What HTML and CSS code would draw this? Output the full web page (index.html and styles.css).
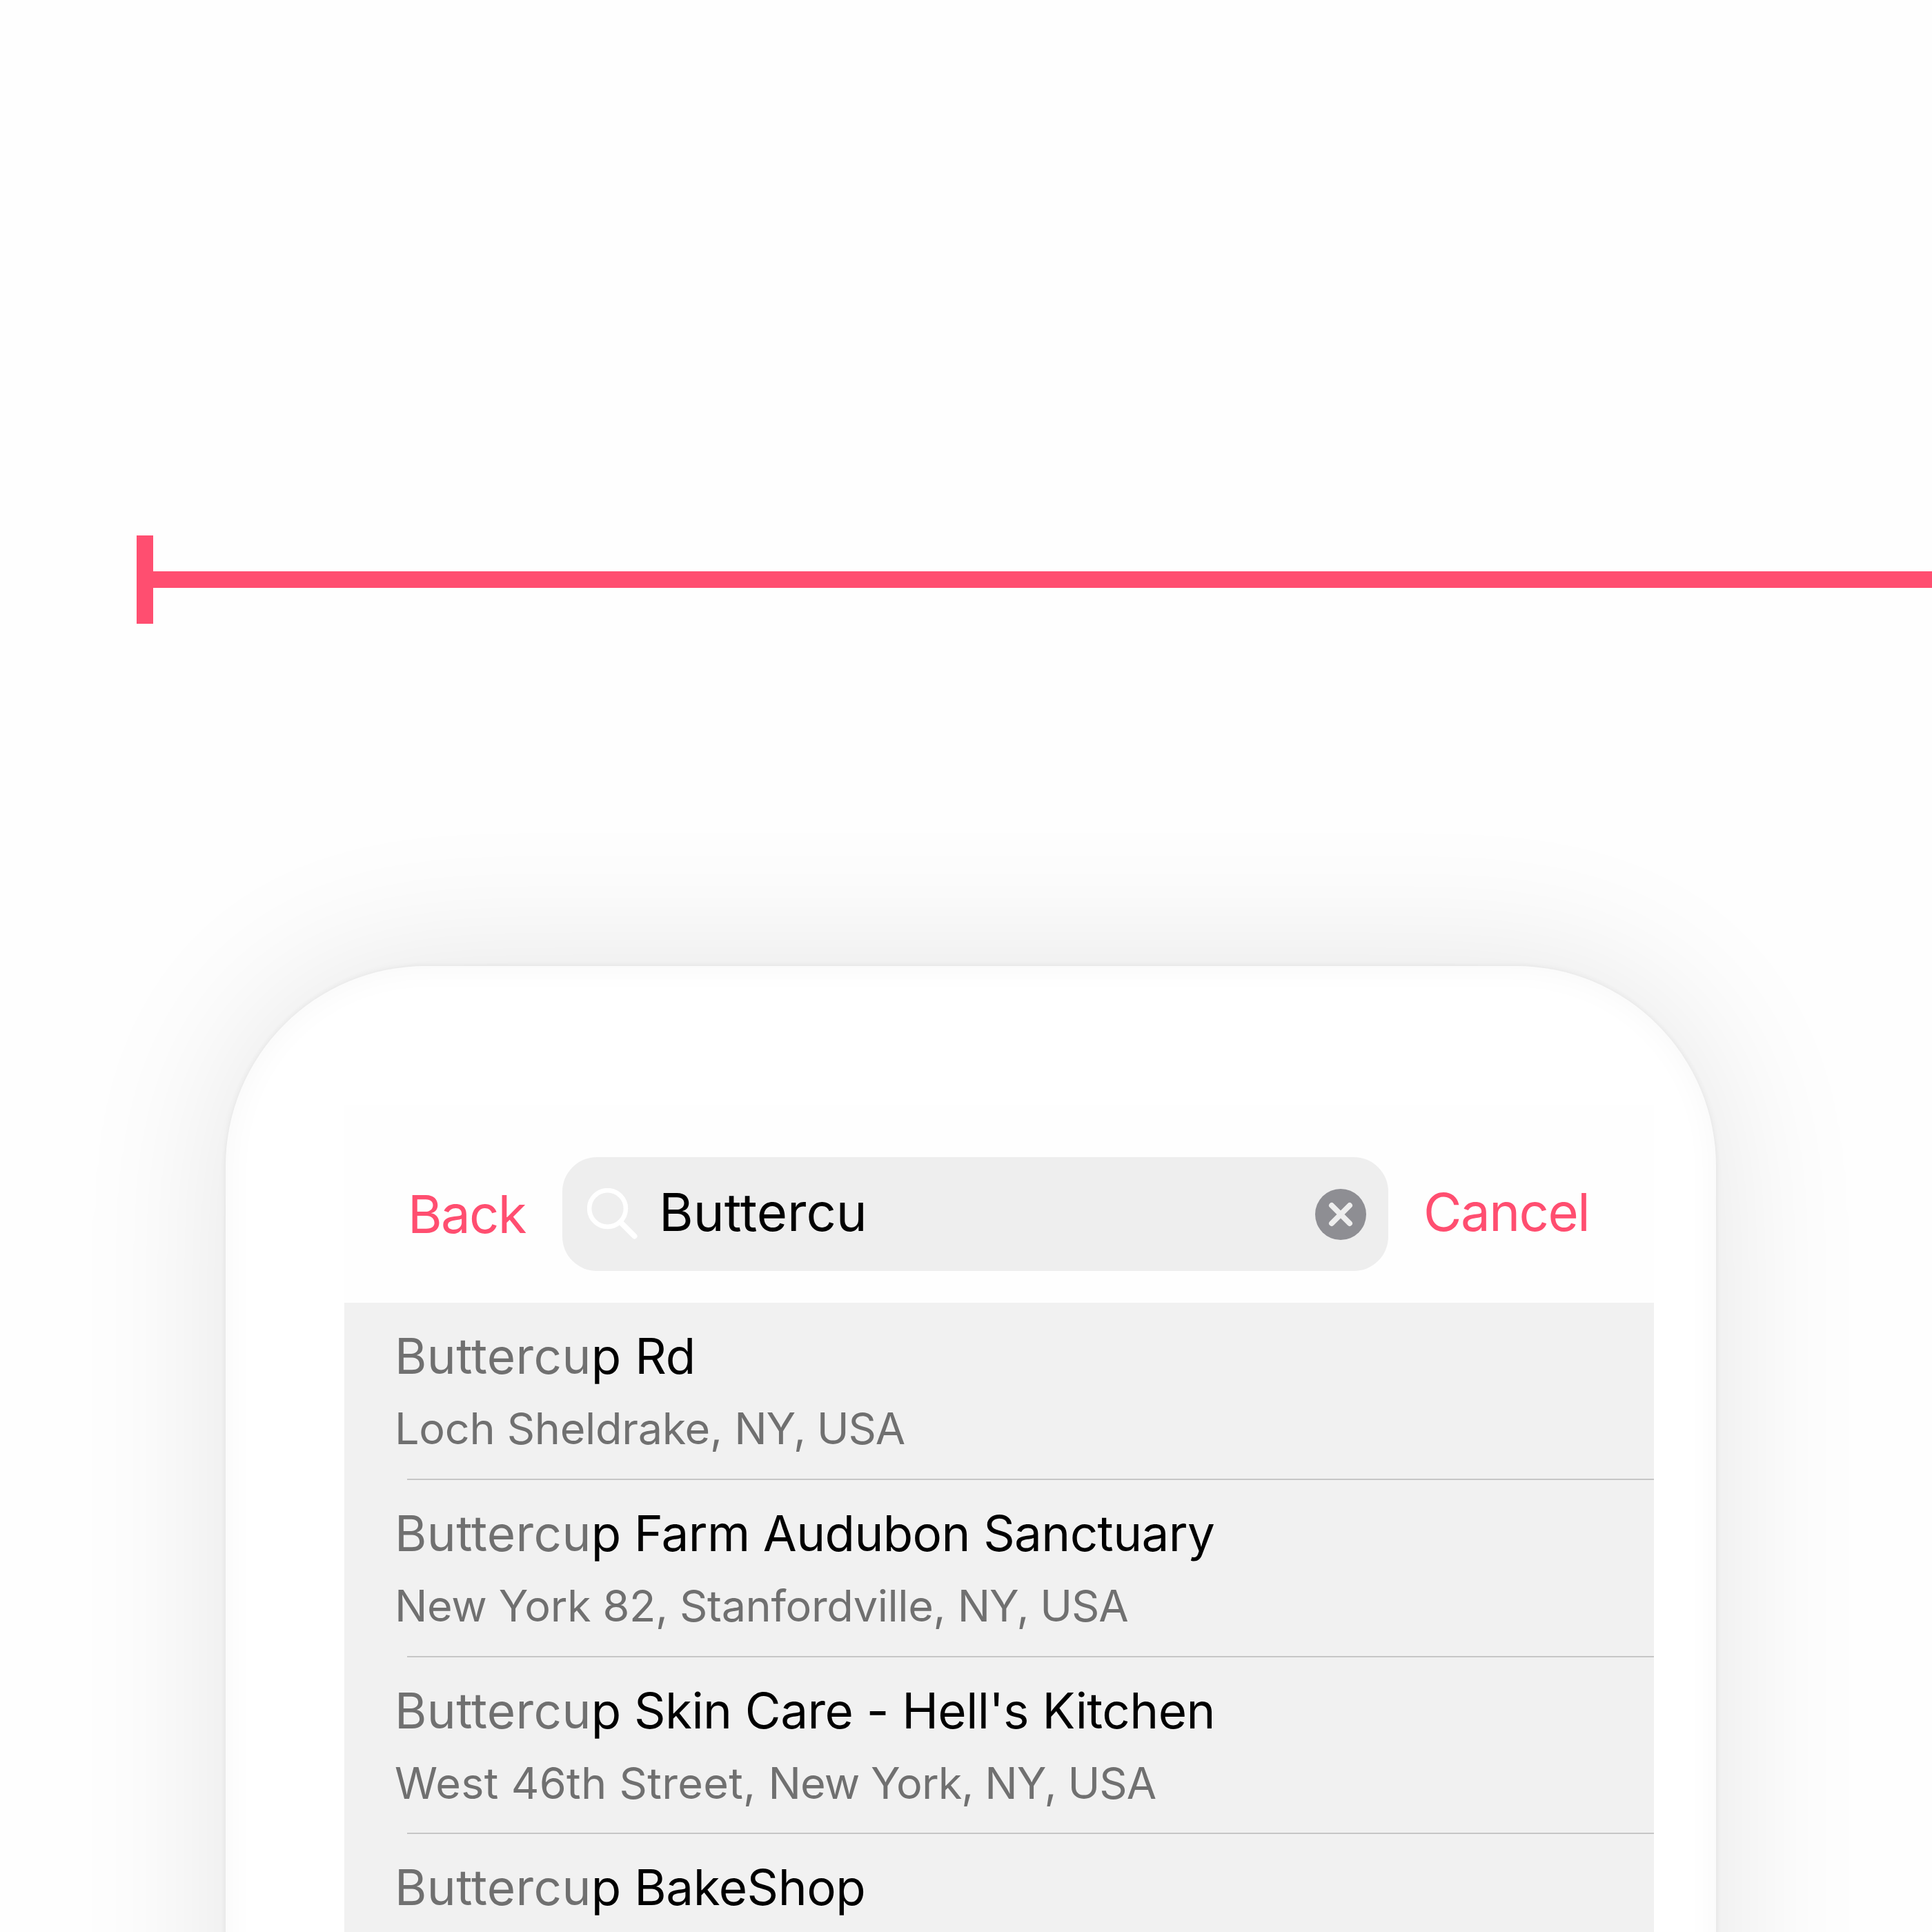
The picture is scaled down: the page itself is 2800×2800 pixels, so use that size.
FILE: index.html
```html
<!DOCTYPE html>
<html lang="en">
<head>
<meta charset="utf-8">
<title>Place search</title>
<link rel="stylesheet" href="styles.css">
</head>
<body>
<div class="measure"><span class="measure-cap"></span><span class="measure-line"></span></div>
<main class="phone">
  <div class="screen">
    <header class="search-bar">
      <a class="action back">Back</a>
      <div class="field">
        <svg class="icon-search" viewBox="0 0 74 76"><circle cx="29.500" cy="29.500" r="26.400"/><path class="handle" d="M49 50L68.500 69.500"/></svg>
        <span class="query">Buttercu</span>
        <svg class="icon-clear" viewBox="0 0 74 74"><circle cx="37" cy="37" r="37"/><path d="M24 24L50 50M50 24L24 50"/></svg>
      </div>
      <a class="action cancel">Cancel</a>
    </header>
    <ul class="results">
      <li class="result road"><p class="title"><span class="match">Buttercu</span>p Rd</p><p class="address"><span class="place">Loch Sheldrake, </span>NY, USA</p></li>
      <li class="result farm"><p class="title"><span class="match">Buttercu</span>p Farm Audubon Sanctuary</p><p class="address"><span class="place">New York 82, Stanfordville, </span>NY, USA</p></li>
      <li class="result skin"><p class="title"><span class="match">Buttercu</span>p Skin Care - Hell's Kitchen</p><p class="address"><span class="place">West 46th Street, </span>New York, NY, USA</p></li>
      <li class="result bake"><p class="title"><span class="match">Buttercu</span>p BakeShop</p></li>
    </ul>
  </div>
</main>
</body>
</html>
```
FILE: styles.css
```css
* { box-sizing: border-box; margin: 0; padding: 0; }

html { overflow: hidden; }

body {
  width: 2800px;
  height: 2800px;
  overflow: hidden;
  background: #fefefe;
  font-family: Inter, "Liberation Sans", sans-serif;
}

.measure {
  display: flex;
  align-items: center;
  margin: 776px 0 496px 198px;
  height: 128px;
}

.measure-cap { width: 24px; height: 128px; background: #ff4e70; }
.measure-line { flex: 1; height: 24px; background: #ff4e70; }

.phone {
  width: 2160px;
  height: 1750px;
  margin-left: 327px;
  padding: 201px 90px 0 172px;
  border-radius: 290px 290px 0 0;
  background: #fff;
  box-shadow:
    0 0 8px rgba(0, 0, 0, 0.07),
    0 0 225px rgba(0, 0, 0, 0.105),
    inset 0 0 50px rgba(0, 0, 0, 0.035);
}

.screen { background: #fefefe; }

.search-bar {
  display: flex;
  align-items: center;
  height: 287px;
  padding: 30px 0 0 92px;
}

.action { color: #ff4e70; font-size: 76px; line-height: 92px; white-space: nowrap; }
.back { width: 224px; padding-bottom: 2px; letter-spacing: -1.7px; }
.cancel { margin-left: 51px; padding-bottom: 7px; letter-spacing: -1.5px; }

.field {
  display: flex;
  align-items: center;
  width: 1197px;
  height: 165px;
  padding: 0 32px 0 36px;
  border-radius: 50px;
  background: #eee;
}

.icon-search { width: 74px; height: 76px; fill: none; stroke: #fff; stroke-width: 6.6; stroke-linecap: round; }
.icon-search .handle { stroke-width: 8; }
.query { flex: 1; margin-left: 30px; padding-bottom: 7px; font-size: 76px; line-height: 92px; color: #000; }
.icon-clear { width: 74px; height: 74px; fill: #8e8e93; }
.icon-clear path { stroke: #eee; stroke-width: 8; stroke-linecap: round; }

.results { height: 1200px; list-style: none; background: #f1f1f1; }

.result { height: 256.8px; padding: 33px 0 0 73px; white-space: nowrap; position: relative; }
.result::after { content: ""; position: absolute; left: 91px; right: 0; bottom: 0; height: 2px; background: #c6c6c6; }
.title { font-size: 71px; line-height: 88px; color: #000; }
.title .match { color: #707070; letter-spacing: 0.35px; }
.address { margin-top: 17px; font-size: 63px; line-height: 88px; color: #707070; }

.road .title { letter-spacing: 0; }
.road .address { letter-spacing: -1.1px; }
.road .place { letter-spacing: -0.33px; }
.farm .title { letter-spacing: -0.63px; }
.farm .address { letter-spacing: -1.1px; }
.farm .place { letter-spacing: -0.4px; }
.skin .title { letter-spacing: -0.57px; }
.skin .address { letter-spacing: -0.95px; }
.skin .place { letter-spacing: 0.3px; }
.bake .title { letter-spacing: -0.45px; }
```
